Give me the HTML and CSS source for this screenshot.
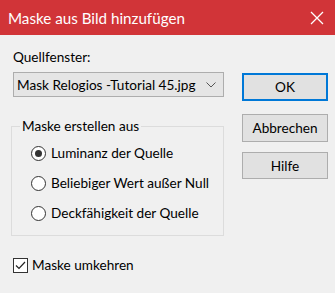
FILE: index.html
```html
<!DOCTYPE html>
<html lang="de">
<head>
<meta charset="UTF-8" />
<title>Maske aus Bild hinzufügen</title>
<link rel="stylesheet" href="styles.css">
</head>
<body>
  <div class="dialog">
    <div class="titlebar">
      <span class="title">Maske aus Bild hinzufügen</span>
      <svg class="close" width="14" height="14" viewBox="0 0 14 14">
        <path d="M1 1 L13 13 M13 1 L1 13" stroke="#fff" stroke-width="1.3" fill="none" />
      </svg>
    </div>

    <div class="content">
      <div class="left">
        <div class="label">Quellfenster:</div>
        <div class="select">
          <span>Mask Relogios -Tutorial 45.jpg</span>
          <svg width="10" height="6" viewBox="0 0 10 6">
            <path d="M0.5 0.5 L5 5 L9.5 0.5" stroke="#555" stroke-width="1" fill="none" />
          </svg>
        </div>

        <fieldset class="group">
          <legend>Maske erstellen aus</legend>
          <div class="radio-row">
            <span class="radio checked"></span>
            <span>Luminanz der Quelle</span>
          </div>
          <div class="radio-row">
            <span class="radio"></span>
            <span>Beliebiger Wert außer Null</span>
          </div>
          <div class="radio-row">
            <span class="radio"></span>
            <span>Deckfähigkeit der Quelle</span>
          </div>
        </fieldset>

        <div class="check-row">
          <span class="checkbox">
            <svg width="13" height="13" viewBox="0 0 13 13">
              <path d="M2 6.5 L5 9.5 L11 3" stroke="#222" stroke-width="1.2" fill="none" />
            </svg>
          </span>
          <span>Maske umkehren</span>
        </div>
      </div>

      <div class="right">
        <button class="btn default">OK</button>
        <button class="btn">Abbrechen</button>
        <button class="btn last">Hilfe</button>
      </div>
    </div>
  </div>
</body>
</html>
```

FILE: styles.css
```css
body {
  margin: 0;
  background: #f0f0f0;
  font-family: Lato, "Noto Sans", sans-serif;
  font-size: 13.6px;
  color: #000;
  white-space: nowrap;
}
.dialog {
  width: 335px;
  height: 293px;
  overflow: hidden;
}
.titlebar {
  height: 35px;
  background: #d13438;
  color: #fff;
  display: flex;
  align-items: center;
  justify-content: space-between;
  padding: 0 11px 0 8px;
}
.title {
  font-size: 15.2px;
}
.close {
  margin-top: 1px;
}
.content {
  display: flex;
  padding: 0 0 0 11px;
}
.left {
  width: 213px;
}
.label {
  margin: 12px 0 0 2px;
  height: 20px;
  line-height: 20px;
}
.select {
  margin: 5px 0 0 2px;
  height: 23px;
  border: 1px solid #adadad;
  background: #e5e5e5;
  display: flex;
  align-items: center;
  justify-content: space-between;
  padding: 0 7px 0 3px;
}
.group {
  margin: 20px 0 0 0;
  padding: 3px 0 0 19px;
  border: 1px solid #dcdcdc;
  box-sizing: border-box;
  height: 119px;
}
.group legend {
  padding: 0 2px;
  margin-left: -11px;
  line-height: 18px;
}
.radio-row {
  display: flex;
  align-items: center;
  gap: 5px;
  height: 30px;
}
.radio {
  width: 13px;
  height: 13px;
  border: 1px solid #333;
  border-radius: 50%;
  background: #fff;
  position: relative;
}
.radio.checked::after {
  content: "";
  position: absolute;
  left: 3px;
  top: 3px;
  width: 7px;
  height: 7px;
  border-radius: 50%;
  background: #333;
}
.check-row {
  display: flex;
  align-items: center;
  gap: 4px;
  margin: 21px 0 0 2px;
}
.checkbox {
  width: 13px;
  height: 13px;
  border: 1px solid #333;
  background: #fff;
  display: flex;
}
.right {
  margin-left: 18px;
  display: flex;
  flex-direction: column;
  padding-top: 38px;
}
.btn {
  width: 86px;
  height: 28px;
  margin: 0 0 13px 0;
  border: 1px solid #adadad;
  background: #e1e1e1;
  font-family: inherit;
  font-size: 13.6px;
  color: #000;
  padding: 0;
}
.btn.default {
  border: 2px solid #0078d7;
}
.btn.last {
  margin-top: -3px;
  height: 27px;
}
```
